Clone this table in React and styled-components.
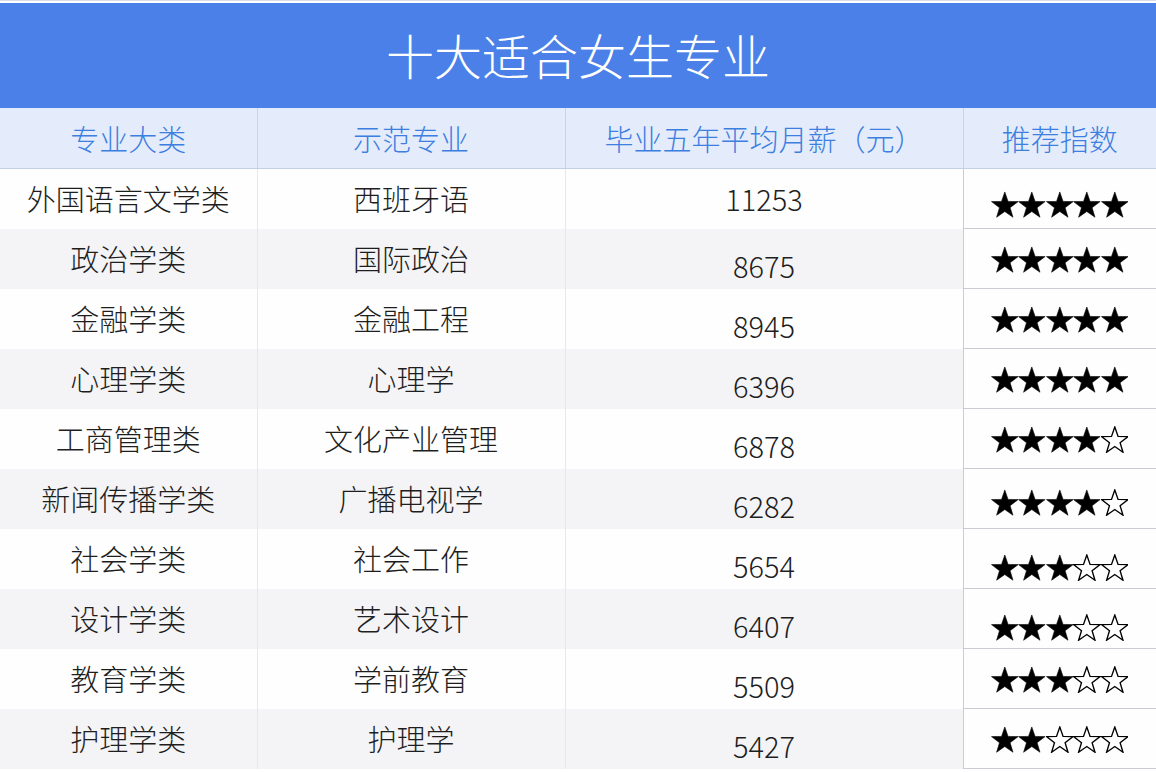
import React from 'react';
import styled, { createGlobalStyle } from 'styled-components';

const GlobalStyle = createGlobalStyle`
  body {
    margin: 0;
    background: #ffffff;
    font-family: "Noto Sans CJK SC", "Noto Sans", sans-serif;
  }
`;

const Page = styled.div`
  width: 1156px;
  height: 772px;
  overflow: hidden;
  background: #ffffff;
  padding-top: 2px;
  box-sizing: border-box;
  border-top: 1px solid #d8dde6;
`;

const TitleBar = styled.div`
  height: 105px;
  background: #4a80e7;
  display: flex;
  align-items: center;
  justify-content: center;
  color: #ffffff;
  font-size: 48px;
  font-weight: 300;
  padding-bottom: 4px;
  box-sizing: border-box;
`;

const Table = styled.table`
  width: 1156px;
  border-collapse: collapse;
  table-layout: fixed;
`;

const HeadCell = styled.th`
  height: 60px;
  padding: 0;
  background: #e4ecfb;
  color: #3d7fe0;
  font-weight: 300;
  font-size: 29px;
  text-align: center;
  border-left: 1px solid #c7d3e8;
  border-bottom: 1px solid #c2cfe6;
  &:first-child { border-left: none; }
`;

const Row = styled.tr`
  height: 60px;
  background: ${p => (p.$even ? '#f4f4f6' : '#fefefe')};
`;

const Cell = styled.td`
  padding: 0;
  padding-top: ${p => p.$shift || 0}px;
  text-align: center;
  color: #1e1e1e;
  font-size: 29px;
  font-weight: 300;
  border-left: 1px solid #e6e7eb;
  line-height: 1;
  &:first-child { border-left: none; }
`;

const StarCell = styled.td`
  padding: 0;
  padding-top: ${p => p.$shift || 0}px;
  background: #fefefe;
  text-align: center;
  border-left: 1px solid #c9ccd3;
  border-right: 1px solid #c9ccd3;
  border-bottom: 1px solid #c9ccd3;
`;

const Stars = styled.div`
  display: inline-flex;
  vertical-align: middle;
`;

const STAR = '14,0.5 17.4,10.3 27.8,10.5 19.5,16.8 22.5,26.7 14,20.8 5.5,26.7 8.5,16.8 0.2,10.5 10.6,10.3';

const Star = ({ filled }) => (
  <svg width="27.6" height="27" viewBox="-0.3 0 28.6 27">
    <polygon
      points={STAR}
      fill={filled ? '#000000' : '#ffffff'}
      stroke="#000000"
      strokeWidth={filled ? 0.6 : 1.4}
      strokeLinejoin="miter"
    />
  </svg>
);

// major, example, monthly pay, stars, pay offset, star offset
const rows = [
  ['外国语言文学类', '西班牙语', '11253', 5, 0, 10],
  ['政治学类', '国际政治', '8675', 5, 14, 0],
  ['金融学类', '金融工程', '8945', 5, 14, 0],
  ['心理学类', '心理学', '6396', 5, 14, 0],
  ['工商管理类', '文化产业管理', '6878', 4, 14, 0],
  ['新闻传播学类', '广播电视学', '6282', 4, 14, 6],
  ['社会学类', '社会工作', '5654', 3, 14, 16],
  ['设计学类', '艺术设计', '6407', 3, 14, 16],
  ['教育学类', '学前教育', '5509', 3, 14, 0],
  ['护理学类', '护理学', '5427', 2, 14, 0],
];

export default function App() {
  return (
    <Page>
      <GlobalStyle />
      <TitleBar>十大适合女生专业</TitleBar>
      <Table>
        <colgroup>
          <col style={{ width: 257 }} />
          <col style={{ width: 308 }} />
          <col style={{ width: 398 }} />
          <col style={{ width: 193 }} />
        </colgroup>
        <thead>
          <tr>
            <HeadCell>专业大类</HeadCell>
            <HeadCell>示范专业</HeadCell>
            <HeadCell>毕业五年平均月薪（元）</HeadCell>
            <HeadCell>推荐指数</HeadCell>
          </tr>
        </thead>
        <tbody>
          {rows.map(([major, example, pay, score, payShift, starShift], i) => (
            <Row key={major} $even={i % 2 === 1}>
              <Cell>{major}</Cell>
              <Cell>{example}</Cell>
              <Cell $shift={payShift}>{pay}</Cell>
              <StarCell $shift={starShift}>
                <Stars>
                  {[0, 1, 2, 3, 4].map(k => (
                    <Star key={k} filled={k < score} />
                  ))}
                </Stars>
              </StarCell>
            </Row>
          ))}
        </tbody>
      </Table>
    </Page>
  );
}
